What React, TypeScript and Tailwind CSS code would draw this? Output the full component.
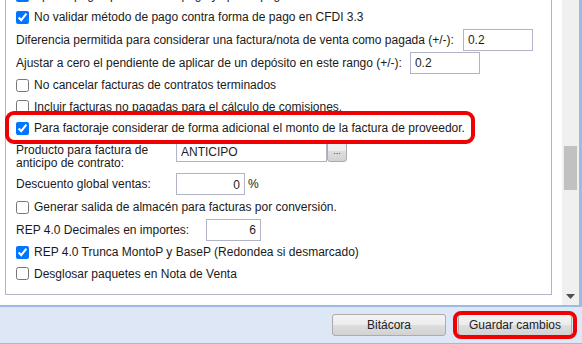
import React from 'react';

const Check = ({ checked }: { checked?: boolean }) => (
  <input
    type="checkbox"
    defaultChecked={checked}
    className="m-0 h-[13px] w-[13px] shrink-0 accent-[#0075ff]"
  />
);

const CheckRow = ({ label, checked, h }: { label: string; checked?: boolean; h: string }) => (
  <div className={`flex items-center gap-[5px] ${h}`}>
    <Check checked={checked} />
    <span className="whitespace-nowrap">{label}</span>
  </div>
);

const Field = ({ value, className }: { value: string; className: string }) => (
  <input
    readOnly
    value={value}
    className={`h-[22px] border border-[#b3b3c7] bg-white px-[4px] pt-[1px] text-[12px] text-[#1e1e1e] outline-none ${className}`}
  />
);

const ToolButton = ({ label }: { label: string }) => (
  <button className="h-[22px] w-[114px] rounded-[3px] border border-[#acacac] bg-[linear-gradient(#f4f4f4_0%,#ececec_50%,#dedede_50%,#d2d2d2_100%)] text-[12px] text-[#222]">
    {label}
  </button>
);

export default function App() {
  return (
    <div className="flex h-[344px] w-[582px] flex-col overflow-hidden bg-white font-['Liberation_Sans',Arial,sans-serif] text-[12px] text-[#1a1a1a]">
      <div className="flex h-[305px]">
        <div className="flex-1 overflow-hidden">
          <div className="-mt-[16px] ml-[5px] w-[547px] border-x border-b border-[#b4b4c8] pb-[10px] pl-[10px]">
            <CheckRow h="h-[22px]" checked label="Aplicar pagos por forma de pago y tipo de pago" />
            <CheckRow h="h-[22px]" checked label="No validar método de pago contra forma de pago en CFDI 3.3" />
            <div className="flex h-[23px] items-center gap-[9px]">
              <span className="whitespace-nowrap">Diferencia permitida para considerar una factura/nota de venta como pagada (+/-):</span>
              <Field value="0.2" className="w-[70px]" />
            </div>
            <div className="flex h-[23px] items-center gap-[8px]">
              <span className="whitespace-nowrap">Ajustar a cero el pendiente de aplicar de un depósito en este rango (+/-):</span>
              <Field value="0.2" className="w-[70px]" />
            </div>
            <CheckRow h="h-[22px]" label="No cancelar facturas de contratos terminados" />
            <CheckRow h="h-[21px]" label="Incluir facturas no pagadas para el cálculo de comisiones." />

            <div className="relative z-10 flex h-[22px] items-center">
              <div className="absolute -bottom-[5px] -left-[11px] -top-[6px] w-[470px] rounded-[9px] border-[4px] border-[#f00000] bg-white" />
              <div className="relative flex items-center gap-[5px]">
                <Check checked />
                <span className="whitespace-nowrap">Para factoraje considerar de forma adicional el monto de la factura de proveedor.</span>
              </div>
            </div>

            <div className="flex h-[33px] items-start">
              <div className="w-[160px] pt-[5px] leading-[13px]">
                Producto para factura de
                <br />
                anticipo de contrato:
              </div>
              <Field value="ANTICIPO" className="mt-[1px] w-[151px]" />
              <button className="mt-[1px] h-[22px] w-[20px] rounded-[3px] border border-[#acacac] bg-[linear-gradient(#f4f4f4_0%,#ececec_50%,#dedede_50%,#d2d2d2_100%)] text-[9px] leading-none text-[#333]">
                ...
              </button>
            </div>

            <div className="flex h-[24px] items-center">
              <span className="w-[160px]">Descuento global ventas:</span>
              <Field value="0" className="w-[69px] text-right" />
              <span className="ml-[3px]">%</span>
            </div>

            <CheckRow h="h-[22px]" label="Generar salida de almacén para facturas por conversión." />

            <div className="flex h-[23px] items-center">
              <span className="w-[190px]">REP 4.0 Decimales en importes:</span>
              <Field value="6" className="w-[55px] text-right" />
            </div>

            <CheckRow h="h-[22px]" checked label="REP 4.0 Trunca MontoP y BaseP (Redondea si desmarcado)" />
            <CheckRow h="h-[21px]" label="Desglosar paquetes en Nota de Venta" />
          </div>
        </div>

        <div className="relative w-[17px] bg-[#f0f0f0]">
          <div className="absolute left-[2px] top-[146px] h-[44px] w-[13px] bg-[#c1c1c1]" />
          <svg className="absolute bottom-[6px] left-[4px]" width="9" height="5" viewBox="0 0 9 5">
            <path d="M0 0h9L4.5 5z" fill="#505050" />
          </svg>
        </div>
        <div className="w-[3px] bg-[#9bbbe3]" />
      </div>

      <div className="flex h-[39px] items-center justify-end gap-[12px] border-b border-t-2 border-[#9bbbe3] bg-[#dde7f5] pr-[10px]">
        <ToolButton label="Bitácora" />
        <div className="relative">
          <div className="absolute -bottom-[3px] -left-[5px] -right-[5px] -top-[3px] rounded-[8px] border-[4px] border-[#f00000]" />
          <ToolButton label="Guardar cambios" />
        </div>
      </div>
    </div>
  );
}
